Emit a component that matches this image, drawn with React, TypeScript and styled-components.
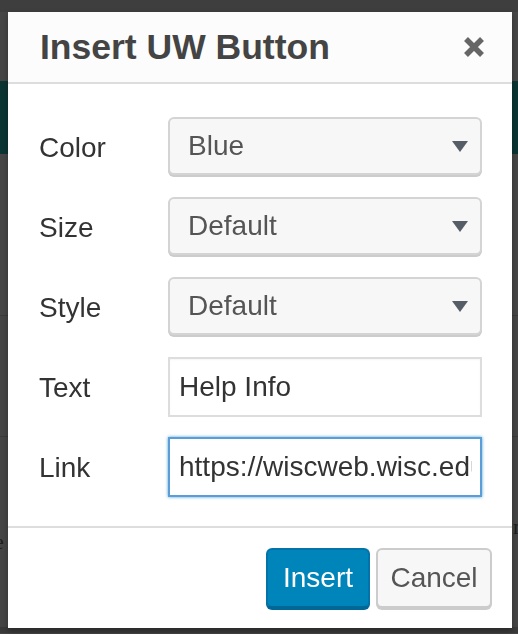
import React from "react";
import styled, { createGlobalStyle } from "styled-components";

const GlobalStyle = createGlobalStyle`
  html, body {
    margin: 0;
    padding: 0;
    background: #454545;
    font-family: "Liberation Sans", Arial, Helvetica, sans-serif;
  }
  * {
    box-sizing: border-box;
  }
`;

type Option = {
  label: string;
  value: string;
};

const selects: Option[] = [
  { label: "Color", value: "Blue" },
  { label: "Size", value: "Default" },
  { label: "Style", value: "Default" },
];

const App: React.FC = () => {
  return (
    <>
      <GlobalStyle />
      <Backdrop>
        <Band $h={12} $bg="#3e3e3e" />
        <Band $h={69} $bg="#464646" />
        <Band $h={73} $bg="#0b3533" />
        <Band $h={162} $bg="#464646" $line />
        <Band $h={121} $bg="#454545" $line />
        <Band $h={90} $bg="#454545" />
        <TextBand>
          <span>e</span>
          <span>n</span>
        </TextBand>
        <Band $h={70} $bg="#454545" />
        <Band $h={6} $bg="#3a3a3a" />
      </Backdrop>

      <Dialog role="dialog">
        <Header>
          <Title>Insert UW Button</Title>
          <CloseButton aria-label="Close">
            <svg width="22" height="22" viewBox="0 0 22 22">
              <path
                d="M3 3 L19 19 M19 3 L3 19"
                stroke="#666"
                strokeWidth="5.5"
                strokeLinecap="butt"
              />
            </svg>
          </CloseButton>
        </Header>

        <Body>
          {selects.map((s) => (
            <React.Fragment key={s.label}>
              <Label>{s.label}</Label>
              <Select>
                <span>{s.value}</span>
                <svg width="16" height="11" viewBox="0 0 16 11">
                  <path d="M0 0 H16 L8 11 Z" fill="#555d66" />
                </svg>
              </Select>
            </React.Fragment>
          ))}
          <Label>Text</Label>
          <TextInput defaultValue="Help Info" />
          <Label>Link</Label>
          <TextInput $focused defaultValue="https://wiscweb.wisc.edu/help/" />
        </Body>

        <Footer>
          <Button $primary $w={104}>
            Insert
          </Button>
          <Button $w={116}>Cancel</Button>
        </Footer>
      </Dialog>
    </>
  );
};

const Backdrop = styled.div`
  display: flex;
  flex-direction: column;
  min-height: 634px;
  overflow: hidden;
`;

const Band = styled.div<{ $h: number; $bg: string; $line?: boolean }>`
  height: ${(p) => p.$h}px;
  background: ${(p) => p.$bg};
  border-bottom: ${(p) => (p.$line ? "1px solid #3b3b3b" : "none")};
`;

const TextBand = styled.div`
  height: 30px;
  background: #454545;
  display: flex;
  justify-content: space-between;
  align-items: center;
  font-family: "Liberation Serif", serif;
  font-size: 22px;
  color: #1e1e1e;

  span:first-child {
    margin-left: -6px;
  }
  span:last-child {
    margin-right: -6px;
    margin-top: -30px;
  }
`;

const Dialog = styled.div`
  position: fixed;
  left: 8px;
  top: 12px;
  width: 504px;
  height: 616px;
  background: #fff;
  display: flex;
  flex-direction: column;
  box-shadow: 0 3px 6px rgba(0, 0, 0, 0.3);
`;

const Header = styled.div`
  height: 72px;
  flex: none;
  background: #fcfcfc;
  border-bottom: 2px solid #dddddd;
  display: flex;
  align-items: center;
  justify-content: space-between;
  padding: 0 27px 0 32px;
`;

const Title = styled.h1`
  margin: 0;
  font-size: 35.5px;
  font-weight: 700;
  color: #444;
  letter-spacing: 0;
`;

const CloseButton = styled.button`
  border: none;
  background: transparent;
  padding: 0;
  width: 22px;
  height: 22px;
  display: flex;
  cursor: pointer;
`;

const Body = styled.div`
  flex: 1;
  padding: 33px 30px 0 31px;
  display: grid;
  grid-template-columns: 129px 1fr;
  grid-auto-rows: 60px;
  row-gap: 20px;
  align-content: start;
`;

const Label = styled.label`
  align-self: center;
  font-size: 28px;
  color: #333;
  padding-top: 2px;
`;

const Select = styled.div`
  height: 58px;
  background: #f7f7f7;
  border: 2px solid #d4d4d4;
  border-radius: 6px;
  box-shadow: 0 2px 0 #cccccc;
  display: flex;
  align-items: center;
  justify-content: space-between;
  padding: 0 12px 0 18px;
  font-size: 28px;
  color: #555;
`;

const TextInput = styled.input<{ $focused?: boolean }>`
  height: 60px;
  width: 100%;
  margin: 0;
  background: #fff;
  border: 2px solid ${(p) => (p.$focused ? "#5b9dd9" : "#dddddd")};
  box-shadow: ${(p) =>
    p.$focused
      ? "0 0 3px rgba(30, 140, 190, 0.8)"
      : "inset 0 1px 2px rgba(0,0,0,0.04)"};
  border-radius: 0;
  padding: 0 8px 0 9px;
  font-family: "Liberation Sans", Arial, Helvetica, sans-serif;
  font-size: 28px;
  color: #333;
  outline: none;
`;

const Footer = styled.div`
  flex: none;
  height: 102px;
  border-top: 2px solid #dddddd;
  display: flex;
  justify-content: flex-end;
  align-items: flex-start;
  gap: 6px;
  padding: 20px 20px 0 0;
`;

const Button = styled.button<{ $primary?: boolean; $w: number }>`
  width: ${(p) => p.$w}px;
  height: 60px;
  padding: 0;
  border-radius: 6px;
  font-family: "Liberation Sans", Arial, Helvetica, sans-serif;
  font-size: 28px;
  text-align: center;
  cursor: pointer;
  background: ${(p) => (p.$primary ? "#0085ba" : "#f7f7f7")};
  color: ${(p) => (p.$primary ? "#fff" : "#555")};
  border: 2px solid ${(p) => (p.$primary ? "#0073aa" : "#cccccc")};
  border-bottom-color: ${(p) => (p.$primary ? "#006799" : "#cccccc")};
  box-shadow: 0 2px 0 ${(p) => (p.$primary ? "#006799" : "#cccccc")};
`;

export default App;
